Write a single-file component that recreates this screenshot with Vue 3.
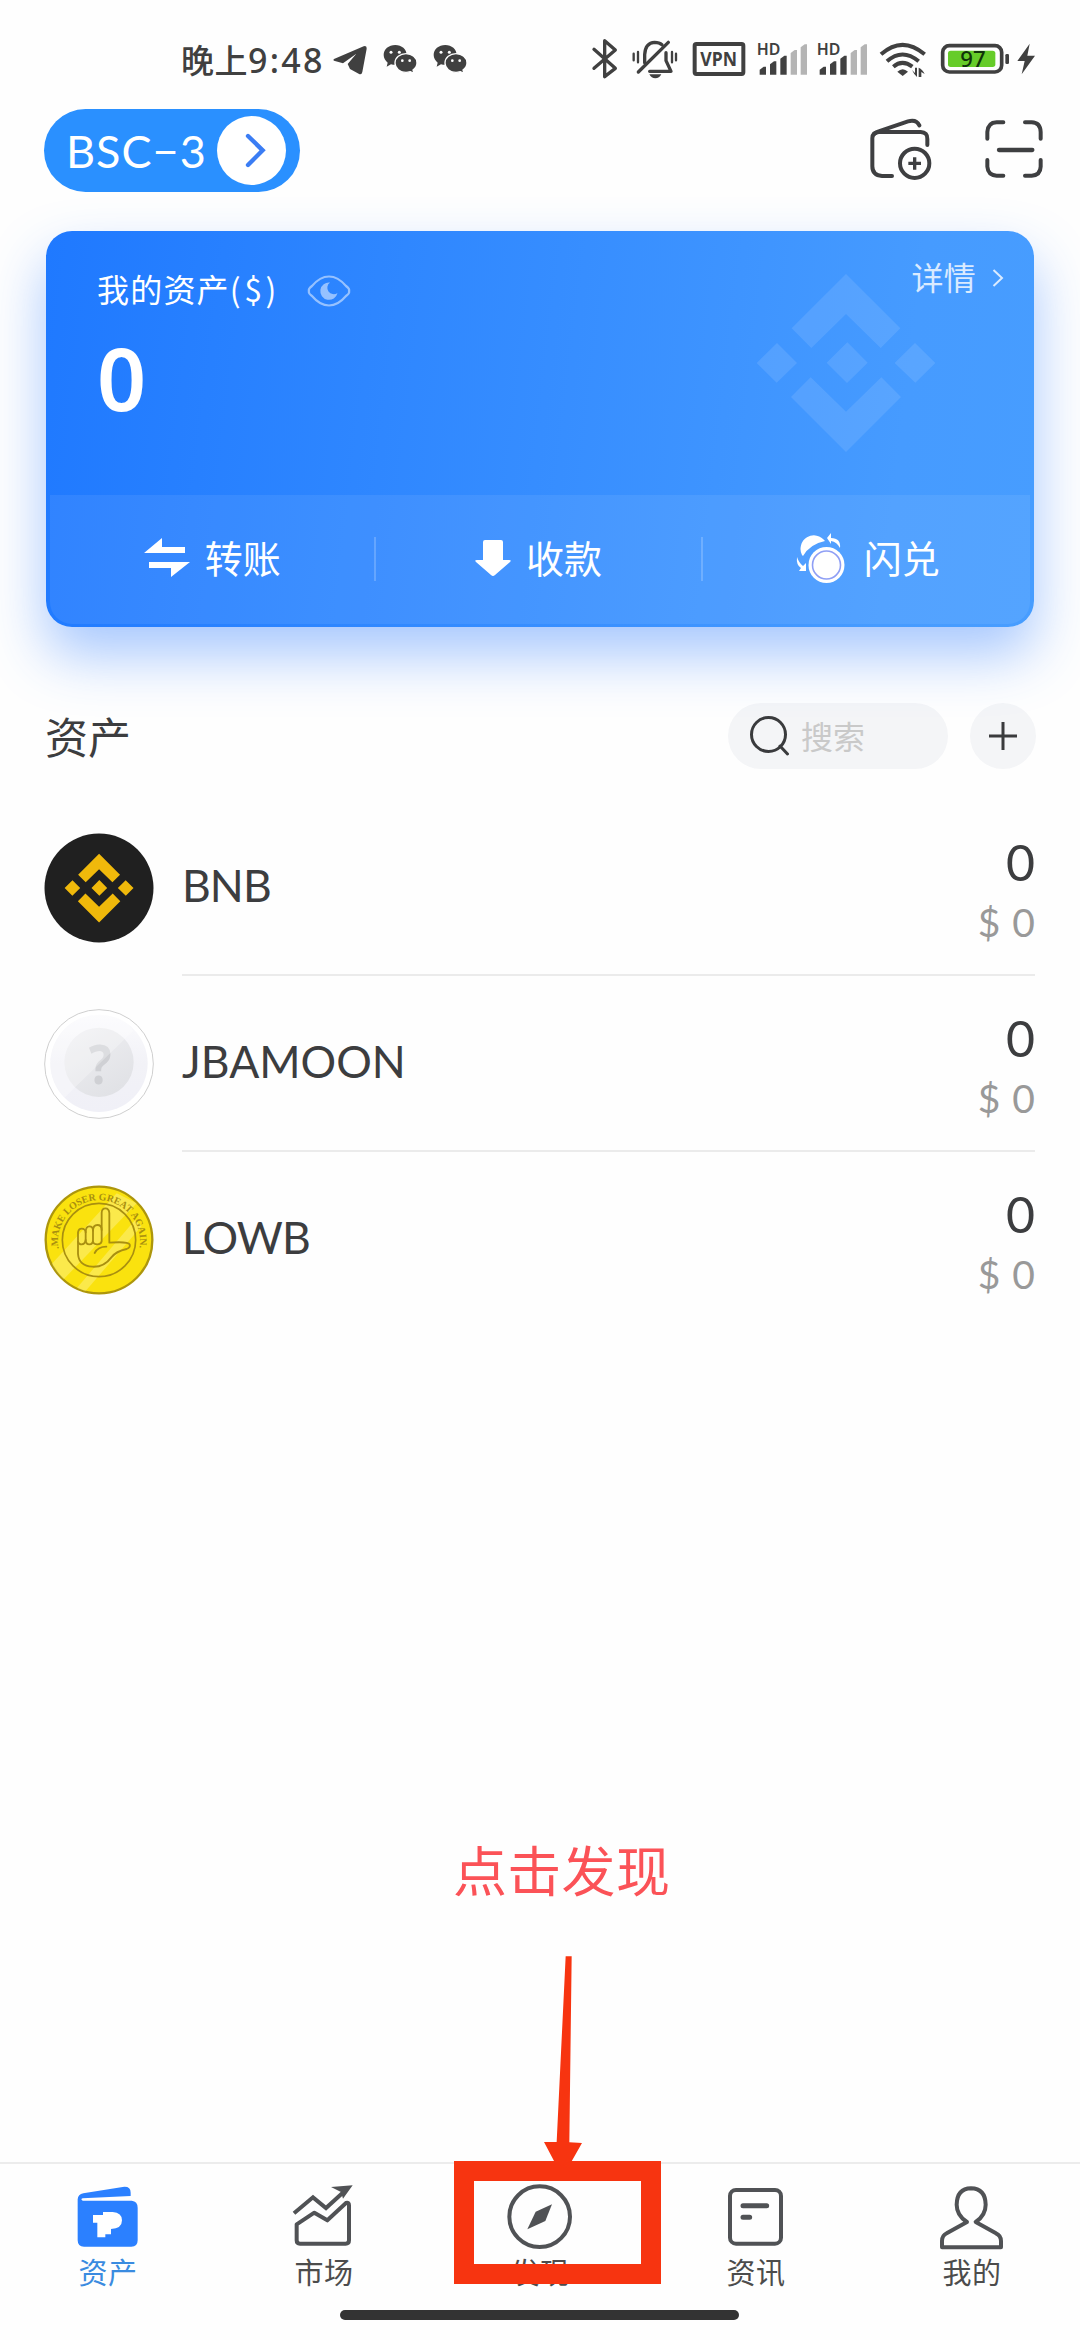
<script setup>
const tokens = [
  { id: 'bnb', name: 'BNB', amount: '0', value: '$ 0' },
  { id: 'unknown', name: 'JBAMOON', amount: '0', value: '$ 0' },
  { id: 'lowb', name: 'LOWB', amount: '0', value: '$ 0' },
]
const tabs = [
  { id: 'assets', label: '资产', box: '222 98 204 204' },
  { id: 'market', label: '市场', box: '870 98 204 204' },
  { id: 'discover', label: '发现', box: '258 1088 204 204' },
  { id: 'news', label: '资讯', box: '246 98 204 204' },
  { id: 'me', label: '我的', box: '894 98 204 204' },
]
const wechatBoxes = ['660 0 120 240', '810 0 120 240']
const signals = [0, 1]
const bars = [
  { x: 566, y: 140, c: '#404040' },
  { x: 597, y: 124, c: '#404040' },
  { x: 628, y: 107, c: '#404040' },
  { x: 659, y: 90, c: '#b4b4b4' },
  { x: 689, y: 73, c: '#b4b4b4' },
]
</script>

<template>
  <div class="screen">
    <header class="status">
      <div class="status-left">
        <span class="clock">晚上<b>9:48</b></span>
        <svg class="telegram" width="40" height="80" viewBox="510 0 120 240">
          <path d="M519 117 L608 79 Q618 76 617 86 L604 156 Q602 166 593 161 L567 147 L560 132 L586 101 L546 130 L519 122 Q515 120 519 117Z" fill="#404040" />
        </svg>
        <svg v-for="b in wechatBoxes" :key="b" class="wechat" width="40" height="80" viewBox="660 0 120 240">
          <path d="M703 75c-20 0-35 13-35 30 0 10 5 17 12 23l-3 12 13-7c24 6 47-6 47-28 0-17-15-30-34-30z" fill="#404040" />
          <path d="M735 101c-18 0-33 12-33 28s15 28 33 28c5 0 9-1 13-2l11 5-3-10c7-5 12-12 12-21 0-16-15-28-33-28z" fill="#404040" stroke="#fff" stroke-width="4" />
          <g fill="#fff"><circle cx="690" cy="97" r="4.5" /><circle cx="715" cy="97" r="4.5" /><circle cx="724" cy="122" r="4" /><circle cx="746" cy="122" r="4" /></g>
        </svg>
      </div>
      <div class="status-right">
        <svg width="37" height="80" viewBox="51 0 111 240">
          <path d="M69 88 L133 145 L101 170 V62 L133 90 L69 145" fill="none" stroke="#404040" stroke-width="10" stroke-linejoin="round" stroke-linecap="round" />
        </svg>
        <svg width="60" height="80" viewBox="162 0 180 240">
          <g fill="none" stroke="#404040" stroke-linecap="round">
            <path d="M188 101V121M201 96V127M303 96V127M315 101V121" stroke-width="7" />
            <path d="M202 156L292 67" stroke-width="10" />
            <path d="M221 128V104Q223 68 251 67Q265 67 273 74" stroke-width="10" />
            <path d="M285 98V122L300 154H236" stroke-width="10" stroke-linejoin="round" />
          </g>
          <path d="M235 163H271Q265 175 253 175Q241 175 235 163Z" fill="#404040" />
        </svg>
        <svg width="66" height="80" viewBox="342 0 198 240">
          <rect x="371" y="72" width="146" height="90" rx="5" fill="none" stroke="#404040" stroke-width="12" />
          <text x="388" y="137" class="vpn" textLength="110" lengthAdjust="spacingAndGlyphs">VPN</text>
        </svg>
        <svg v-for="s in signals" :key="s" width="60" height="80" viewBox="540 0 180 240">
          <text x="557" y="105" class="hd" textLength="71" lengthAdjust="spacingAndGlyphs">HD</text>
          <path v-for="b in bars" :key="b.x" :d="`M${b.x} ${b.y + 9} L${b.x + 12} ${b.y} H${b.x + 19} V164 H${b.x} Z`" :fill="b.c" />
        </svg>
        <svg width="64" height="80" viewBox="900 0 192 240">
          <g fill="none" stroke="#404040" stroke-width="12">
            <path d="M930 103Q994 46 1061 103" />
            <path d="M948 124Q994 83 1043 124" />
            <path d="M967 140Q994 117 1024 140" />
          </g>
          <path d="M979 155Q995 140 1011 155L995 168Z" fill="#404040" />
          <path d="M1023 150L1032 159V143H1038V171Q1030 165 1023 150ZM1043 143Q1055 148 1061 162L1051 156V171H1043Z" fill="#404040" />
        </svg>
        <svg width="78" height="80" viewBox="1092 0 234 240">
          <rect x="1115" y="77" width="177" height="79" rx="20" fill="none" stroke="#404040" stroke-width="11" />
          <rect x="1131" y="92" width="142" height="49" rx="8" fill="#66cc29" />
          <rect x="1303" y="102" width="11" height="30" rx="4" fill="#404040" />
          <text x="1168" y="142" class="pct" textLength="76" lengthAdjust="spacingAndGlyphs">97</text>
        </svg>
        <svg width="28" height="80" viewBox="1326 0 84 240">
          <path d="M1376 71L1339 123H1361L1352 163L1392 107H1369Z" fill="#404040" />
        </svg>
      </div>
    </header>

    <nav class="topbar">
      <div class="wallet-pill">
        <span>BSC−3</span>
        <i class="pill-go">
          <svg width="69" height="69" viewBox="590 78 207 207"><path d="M683 138L727 181L683 225" fill="none" stroke="#3b7df4" stroke-width="13" stroke-linecap="round" stroke-linejoin="miter" /></svg>
        </i>
      </div>
      <div class="top-actions">
        <svg width="66" height="66" viewBox="80 82 198 198" fill="none" stroke="#3e3f41" stroke-width="12" stroke-linecap="round" stroke-linejoin="round">
          <path d="M152 259H122Q93 257 93 230V146Q93 127 115 127H238Q259 128 258 148V166" />
          <path d="M98 134Q102 129 112 125L200 95Q225 88 234 107" />
          <circle cx="220" cy="221" r="44" />
          <path d="M220 203V240M201 221H239" stroke-width="10" stroke-linecap="butt" />
        </svg>
        <svg width="60" height="66" viewBox="431 82 180 198" fill="none" stroke="#3e3f41" stroke-width="12" stroke-linecap="round">
          <path d="M441 147V127Q443 99 469 98H489M554 98H574Q600 99 601 127V147M441 211V231Q443 257 469 258H489M554 258H574Q600 257 601 231V211" />
          <path d="M476 181H576" stroke-width="13" />
        </svg>
      </div>
    </nav>

    <section class="card">
      <svg class="watermark" width="182" height="182" viewBox="165 185 546 546" fill="#fff">
        <path d="M438 191L601 354L542 413L438 311L334 413L275 354Z" />
        <path d="M438 725L603 560L544 501L438 604L332 501L273 560Z" />
        <path d="M231 398L291 458L230 517L170 458ZM442 396L503 457L441 518L380 457ZM645 398L706 458L646 517L584 458Z" />
      </svg>
      <div class="card-main">
        <div class="card-head">
          <span class="card-title">我的资产<em>($)</em></span>
          <svg class="eye" width="44" height="32" viewBox="0 0 44 32">
            <path d="M2 16Q1 14 5 11Q13 1.500 22 1.500T39 11Q43 14 42 16Q43 18 39 21Q31 30.500 22 30.500T5 21Q1 18 2 16Z" fill="none" stroke="#fff" stroke-width="2.200" />
            <path d="M23 7.500A8.700 8.700 0 1 0 30.500 18A5.200 5.200 0 0 1 23 7.500Z" fill="#fff" />
          </svg>
        </div>
        <div class="details">
          <span>详情</span>
          <svg width="12" height="20" viewBox="0 0 12 20"><path d="M1.500 2L10 10L1.500 18" fill="none" stroke="#fff" stroke-width="2" /></svg>
        </div>
        <div class="total">0</div>
      </div>
      <div class="card-actions">
        <div class="action">
          <svg width="46" height="40" viewBox="0 0 46 40" fill="#fff"><path d="M0 15L18 0V9H41V15ZM46 24L27 39V30H5V24Z" /></svg>
          <span>转账</span>
        </div>
        <div class="action receive">
          <svg width="36" height="38" viewBox="0 0 36 38" fill="#fff"><path d="M8 3Q8 1 10 1H26Q28 1 28 3V21H34Q37 21 35 23L20 36Q18 38 16 36L1 23Q-1 21 2 21H8Z" /></svg>
          <span>收款</span>
        </div>
        <div class="action swap">
          <svg width="50" height="52" viewBox="0 0 50 52">
            <path d="M6 23A13.500 13.500 0 0 1 29 9Q14 12 7 24Z" fill="#fff" />
            <circle cx="30.500" cy="33" r="18" fill="#fff" />
            <circle cx="30.500" cy="33" r="14" fill="none" stroke="#8f9ff5" stroke-width="1.600" />
            <path d="M35 6V1L31 6L35 12V9Q41 10 44 16Q45 6 35 6Z" fill="#fff" />
            <path d="M1 25Q0 33 5 36L3 39H10V31L7 34Q3 31 1 25Z" fill="#fff" />
          </svg>
          <span>闪兑</span>
        </div>
      </div>
    </section>

    <section class="list-head">
      <h2>资产</h2>
      <div class="search">
        <svg width="40" height="40" viewBox="0 0 40 40" fill="none" stroke="#3a3b3d" stroke-width="3"><circle cx="18.500" cy="18.500" r="17" /><path d="M30 30L37.500 38" stroke-linecap="round" /></svg>
        <span>搜索</span>
      </div>
      <div class="add">
        <svg width="28" height="28" viewBox="0 0 28 28"><path d="M14 0V28M0 14H28" stroke="#3a3b3d" stroke-width="3" /></svg>
      </div>
    </section>

    <ul class="tokens">
      <li v-for="t in tokens" :key="t.id">
        <svg v-if="t.id === 'bnb'" class="coin" viewBox="0 0 110 110">
          <circle cx="55" cy="55" r="54.500" fill="#202020" />
          <g transform="translate(20 20) scale(.1285) translate(-165 -185)" fill="#f0b90b">
            <path d="M438 191L601 354L542 413L438 311L334 413L275 354Z" />
            <path d="M438 725L603 560L544 501L438 604L332 501L273 560Z" />
            <path d="M231 398L291 458L230 517L170 458ZM440 396L501 457L440 518L379 457ZM645 398L706 458L646 517L584 458Z" />
          </g>
        </svg>
        <svg v-else-if="t.id === 'unknown'" class="coin" viewBox="72 87 330 330">
          <defs>
            <linearGradient id="outer" x1="0" y1="0" x2="0" y2="1"><stop offset="0" stop-color="#fbfbfd" /><stop offset=".5" stop-color="#f2f2f7" /><stop offset="1" stop-color="#f0f0f7" /></linearGradient>
            <linearGradient id="inner" x1="0" y1="0" x2=".6" y2="1"><stop offset="0" stop-color="#f0f0f3" /><stop offset="1" stop-color="#e1e2e6" /></linearGradient>
          </defs>
          <circle cx="237" cy="252" r="163" fill="#fff" stroke="#cfcfcf" stroke-width="3" />
          <circle cx="237" cy="250" r="146" fill="url(#outer)" />
          <circle cx="237" cy="247" r="104" fill="url(#inner)" />
          <text x="206" y="313" textLength="68" lengthAdjust="spacingAndGlyphs" class="question">?</text>
          <path d="M160 327L340 152Q310 104 237 104A146 146 0 0 0 134 353Z" fill="#fff" opacity=".28" />
        </svg>
        <svg v-else class="coin" viewBox="72 615 330 330">
          <defs>
            <clipPath id="coin-clip"><circle cx="237" cy="780" r="158" /></clipPath>
            <path id="motto" d="M116 806A123 123 0 1 1 358 806" />
          </defs>
          <circle cx="237" cy="780" r="160" fill="#fae20f" stroke="#ad960c" stroke-width="7" />
          <g clip-path="url(#coin-clip)" fill="#fff" opacity=".25">
            <path d="M60 890L290 640L350 670L100 930Z" />
            <path d="M170 925L345 720L365 738L195 935Z" />
          </g>
          <circle cx="237" cy="780" r="110" fill="none" stroke="#a98f10" stroke-width="5" />
          <text class="motto"><textPath href="#motto" textLength="428" lengthAdjust="spacingAndGlyphs">.MAKE LOSER GREAT AGAIN.</textPath></text>
          <g fill="none" stroke="#a98f10" stroke-width="5.500" stroke-linecap="round" stroke-linejoin="round">
            <path d="M174 785V822Q177 858 217 860Q252 862 274 832Q288 814 320 807Q332 803 329 793Q324 784 268 788V699Q267 685 256 685Q245 685 245 699V784Q243 793 232 793Q220 793 219 784" />
            <path d="M174 785V757Q176 746 185 746Q196 746 197 757V780Q195 793 185 793Q176 793 174 785" />
            <path d="M197 757Q197 739 208 739Q219 739 219 752V780Q219 793 208 793Q197 793 197 780" />
            <path d="M219 752Q219 735 232 735Q245 735 245 750" />
            <path d="M224 819Q234 800 259 800" />
          </g>
        </svg>
        <div class="token-body">
          <span class="token-name" :class="{ tight: t.name.length < 5 }">{{ t.name }}</span>
          <div class="figures"><strong>{{ t.amount }}</strong><small>{{ t.value }}</small></div>
        </div>
      </li>
    </ul>

    <footer class="tabbar">
      <div v-for="t in tabs" :key="t.id" class="tab" :class="{ active: t.id === 'assets' }">
        <svg width="68" height="68" :viewBox="t.box">
          <g v-if="t.id === 'assets'">
            <path d="M233 151V147Q234 132 250 129L368 110Q392 107 392 127V137L248 144Q240 146 248 151H395Q413 153 413 172V270Q413 289 394 289H252Q233 289 233 270Z" fill="#2b80ff" />
            <path d="M279 194H309V185H338Q366 187 366 210Q366 235 333 236V252H316V261H292V217H279Z" fill="#fff" />
          </g>
          <g v-else-if="t.id === 'market'" fill="none" stroke="#505255" stroke-width="12">
            <path d="M890 222L943 187L982 210L1038 158Q1047 155 1047 165V270Q1047 280 1037 280H900Q890 280 890 270Z" stroke-linejoin="round" />
            <path d="M882 189L939 141L978 173L1030 126" />
            <path d="M993 110L1058 105L1029 145L1023 125Z" fill="#505255" stroke="none" />
          </g>
          <g v-else-if="t.id === 'discover'">
            <circle cx="359" cy="1189" r="91" fill="none" stroke="#505255" stroke-width="12" />
            <path d="M396 1152L376 1202L322 1227L347 1174Z" fill="#505255" />
          </g>
          <g v-else-if="t.id === 'news'" fill="none" stroke="#505255" stroke-linecap="round">
            <rect x="270" y="119" width="153" height="161" rx="18" stroke-width="12" />
            <path d="M309 166H380M309 201H329" stroke-width="15" />
          </g>
          <path v-else fill="none" stroke="#505255" stroke-width="12" stroke-linejoin="round" d="M971 215H981Q950 195 950 163Q951 115 993 114Q1036 115 1037 163Q1037 195 1007 215L1068 249Q1083 256 1083 272V291H906V272Q906 256 920 249L981 215" />
        </svg>
        <span>{{ t.label }}</span>
      </div>
    </footer>
    <div class="home-indicator"></div>

    <div class="note">点击发现</div>
    <svg class="arrow" width="40" height="210" viewBox="370 405 120 630"><path d="M438 409H456L449 967L487 969L450 1034H409L373 966H411Z" fill="#f73410" /></svg>
    <div class="marker"></div>
  </div>
</template>

<style>
body { background: #fefefe; }
</style>

<style scoped>
.screen { position: relative; width: 1080px; height: 2340px; overflow: hidden; display: flex; flex-direction: column; background: #fefefe; color: #3c3d3f; font-family: Lato, "Noto Sans CJK SC", sans-serif; }
svg { display: block; flex: none; }
.status { display: flex; justify-content: space-between; height: 109px; padding: 20px 39px 0 181px; box-sizing: border-box; }
.status-left, .status-right { display: flex; }
.clock { width: 149px; height: 78px; font: 500 33px/78px "Noto Sans CJK SC", sans-serif; letter-spacing: .5px; color: #404040; white-space: nowrap; }
.clock b { font: 500 34px/78px "Noto Sans", sans-serif; letter-spacing: 2.300px; }
.telegram { margin-left: 1px; }
.wechat { margin-left: 10px; }
.vpn { font: 700 58px "Noto Sans", sans-serif; fill: #404040; }
.hd { font: 600 49px "Noto Sans", sans-serif; fill: #404040; }
.pct { font: 500 66px "Noto Sans", sans-serif; fill: #10330a; }
.topbar { display: flex; justify-content: space-between; height: 122px; padding: 0 36px 0 44px; }
.wallet-pill { display: flex; align-items: center; justify-content: space-between; width: 256px; height: 83px; padding: 0 14px 0 22px; box-sizing: border-box; border-radius: 42px; background: #2a90ff; color: #fff; font-size: 45px; letter-spacing: 1px; white-space: nowrap; }
.pill-go { width: 69px; height: 69px; border-radius: 50%; background: #fff; }
.top-actions { display: flex; gap: 50px; padding-top: 8px; }
.card { position: relative; display: flex; flex-direction: column; width: 988px; height: 396px; margin-left: 46px; flex: none; border-radius: 26px; background: linear-gradient(97deg, #1f79ff 0%, #469bff 85%, #479dff 100%); box-shadow: 0 28px 56px rgba(45, 125, 255, .42); color: #fff; box-sizing: border-box; }
.watermark { position: absolute; left: 709px; top: 41px; opacity: .1; }
.card-main { flex: 1; display: grid; grid-template-columns: 1fr auto; align-content: start; padding: 0 30px 0 51px; }
.card-head { display: flex; align-items: center; height: 119px; }
.card-title { margin-top: -6px; font-size: 32px; letter-spacing: 1.200px; }
.card-title em { font-style: normal; letter-spacing: 3.500px; font-family: "Noto Sans CJK SC", sans-serif; }
.eye { margin-left: 27px; opacity: .5; }
.details { display: flex; align-items: center; gap: 16px; height: 93px; font-size: 32px; letter-spacing: .3px; opacity: .8; }
.details span { margin-top: -4px; }
.total { grid-column: 1 / -1; margin-top: -12px; font: 600 86px/80px "Noto Sans", sans-serif; }
.card-actions { display: flex; height: 129px; margin: 0 4px 3px; border-radius: 0 0 22px 22px; background: rgba(255, 255, 255, .075); }
.action { flex: 1; display: flex; align-items: center; justify-content: center; gap: 15px; height: 44px; margin-top: 42px; font-size: 38px; border-right: 2px solid rgba(255, 255, 255, .2); }
.action span { margin-top: -5px; }
.action svg { margin-top: -2px; }
.action:last-child { border-right: 0; }
.action.swap { gap: 18px; padding-left: 3px; }
.list-head { display: flex; align-items: center; height: 66px; margin: 76px 44px 0 45px; }
.list-head h2 { flex: 1; margin: -2px 0 0; font-size: 43px; font-weight: 400; }
.search { display: flex; align-items: center; gap: 11px; width: 220px; height: 66px; padding-left: 22px; box-sizing: border-box; border-radius: 33px; background: #f4f5f7; color: #c9c9c9; font-size: 32px; }
.search span { margin-top: -3px; }
.add { display: flex; align-items: center; justify-content: center; width: 66px; height: 66px; margin-left: 22px; border-radius: 50%; background: #f4f5f7; }
.tokens { list-style: none; margin: 31px 45px 0 44px; padding: 0; }
.tokens li { display: flex; align-items: center; height: 176px; }
.coin { width: 110px; height: 110px; }
.token-body { flex: 1; display: flex; justify-content: space-between; height: 176px; box-sizing: border-box; margin-left: 28px; border-bottom: 2px solid #ebebeb; }
li:last-child .token-body { border-color: transparent; }
.token-name { font-size: 44.500px; line-height: 169px; }
.token-name.tight { letter-spacing: -.9px; }
.figures { display: flex; flex-direction: column; align-items: flex-end; padding-top: 32px; }
.figures strong { font-size: 50px; line-height: 60px; font-weight: 400; }
.figures small { font-size: 39px; line-height: 60px; word-spacing: 2px; color: #999; }
.question { font: 700 160px "Noto Sans", sans-serif; fill: #cfd0d4; }
.motto { font: 700 30px "Liberation Serif", serif; fill: #a98f10; }
.tabbar { display: flex; margin-top: auto; height: 146px; flex: none; border-top: 2px solid #ececec; }
.tab { flex: 1; display: flex; flex-direction: column; align-items: center; padding-top: 19px; font-size: 29px; line-height: 44px; letter-spacing: .5px; color: #4c4c4c; }
.tab.active { color: #3a8be0; }
.home-indicator { flex: none; width: 399px; height: 10px; margin: 0 0 20px 340px; border-radius: 5px; background: #333; }
.note { position: absolute; left: 453px; top: 1832px; font-size: 54px; line-height: 80px; color: #fb5257; letter-spacing: .3px; white-space: nowrap; }
.arrow { position: absolute; left: 543px; top: 1955px; }
.marker { position: absolute; left: 454px; top: 2161px; width: 207px; height: 123px; box-sizing: border-box; border: 20px solid #f73410; }
</style>
